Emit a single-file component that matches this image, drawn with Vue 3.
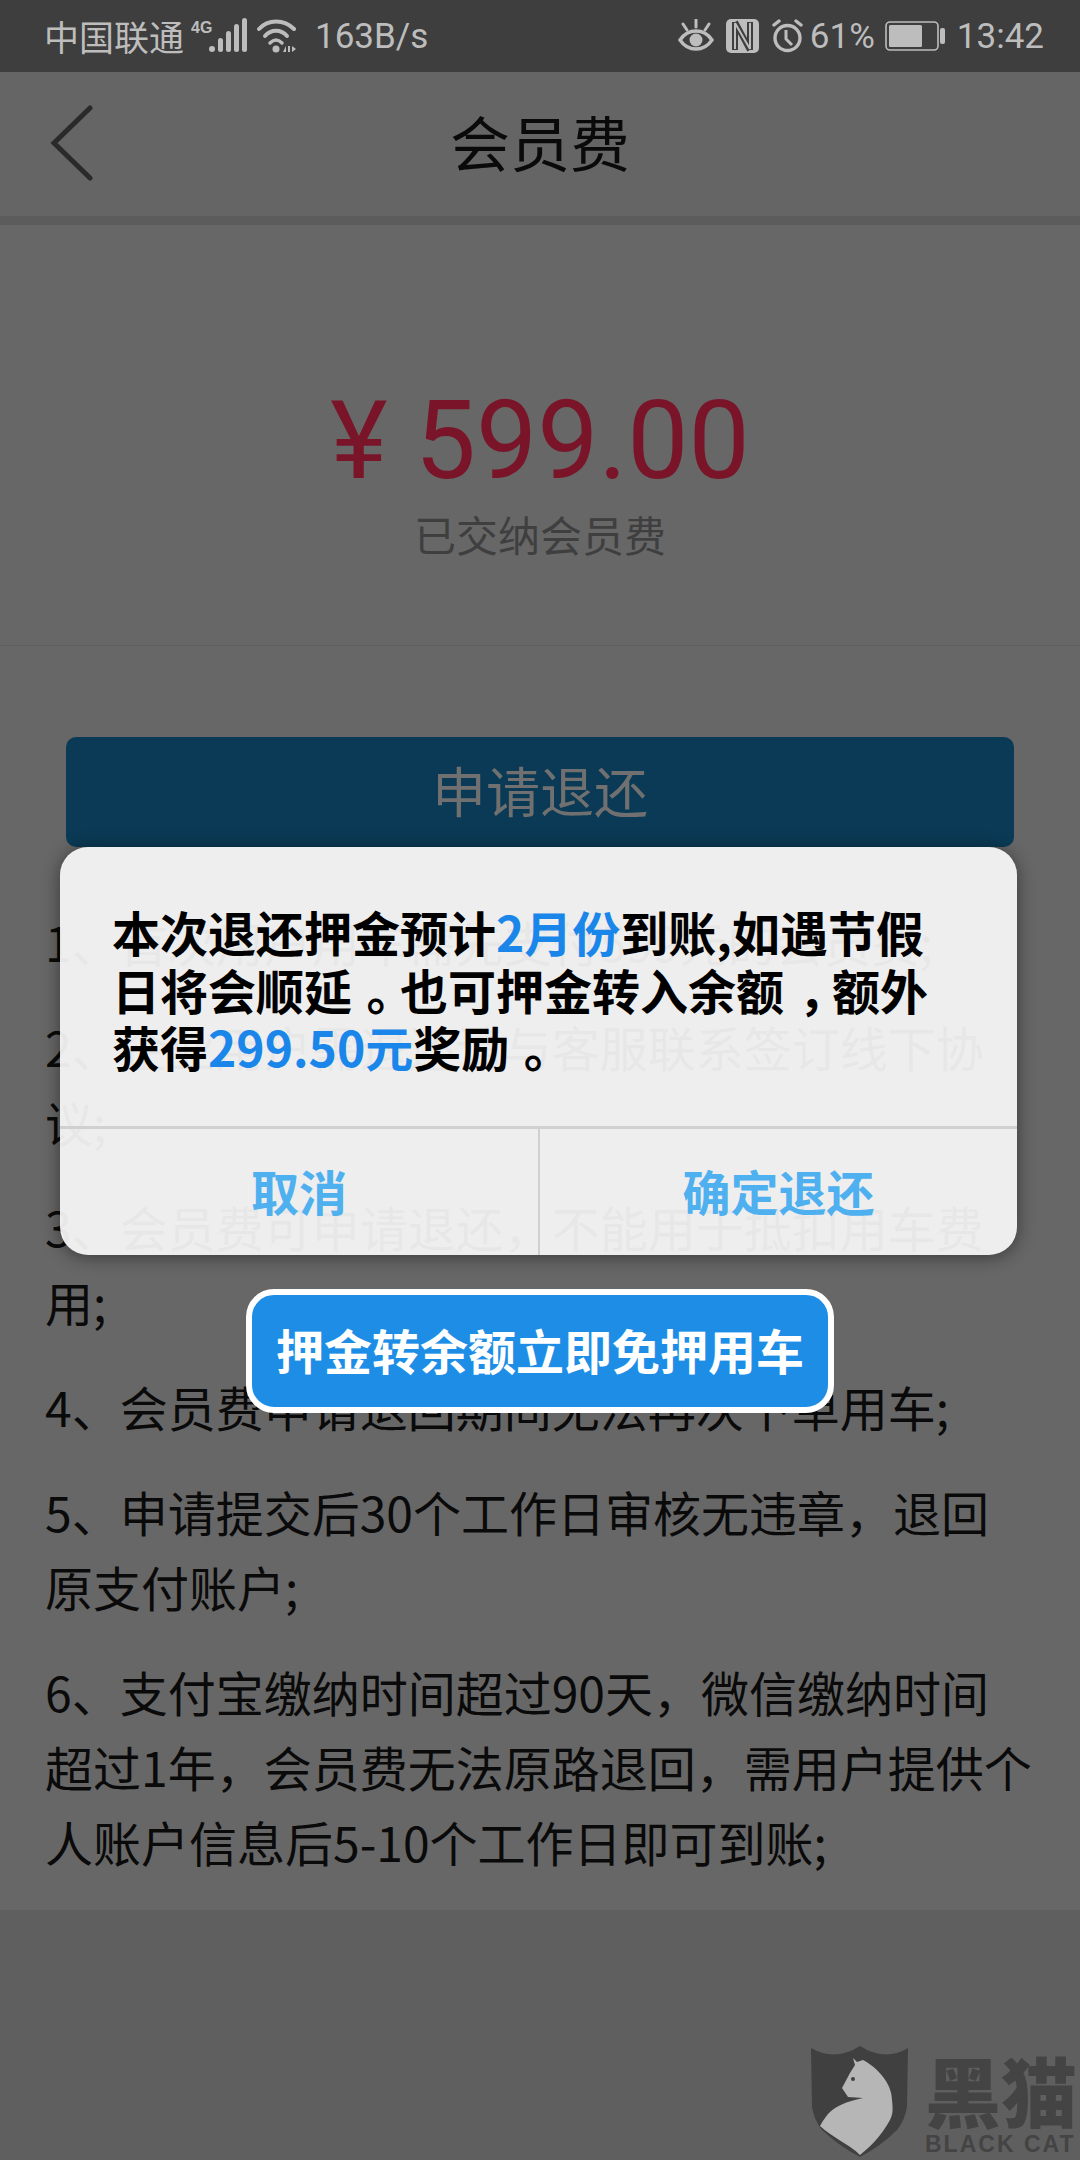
<script setup>
const rules = [
  '1、首次用户用车需先支付599元的会员费;',
  '2、企业用户需退还请与客服联系签订线下协议;',
  '3、会员费可申请退还，不能用于抵扣用车费用;',
  '4、会员费申请退回期间无法再次下单用车;',
  '5、申请提交后30个工作日审核无违章，退回原支付账户;',
  '6、支付宝缴纳时间超过90天，微信缴纳时间超过1年，会员费无法原路退回，需用户提供个人账户信息后5-10个工作日即可到账;',
]
</script>

<template>
  <div class="page">
    <header class="status">
      <div class="status__left">
        <span class="carrier">中国联通</span>
        <svg class="icon-signal" width="58" height="36" viewBox="0 0 58 36" aria-hidden="true">
          <text x="0" y="15" class="net-label">4G</text>
          <circle cx="21" cy="31" r="3" fill="#bdbdbd" />
          <rect x="27" y="20" width="5" height="14" rx="2.5" fill="#bdbdbd" />
          <rect x="35" y="13" width="5" height="21" rx="2.5" fill="#bdbdbd" />
          <rect x="43" y="6" width="5" height="28" rx="2.5" fill="#bdbdbd" />
          <rect x="51" y="0" width="5" height="34" rx="2.5" fill="#bdbdbd" />
        </svg>
        <svg class="icon-wifi" width="40" height="36" viewBox="0 0 40 36" aria-hidden="true">
          <path d="M2 11C11 1 27 1 37 11" fill="none" stroke="#bdbdbd" stroke-width="4" stroke-linecap="round" />
          <path d="M8 18C14 11 24 11 30 18" fill="none" stroke="#bdbdbd" stroke-width="4" stroke-linecap="round" />
          <path d="M13 25C17 21 21 21 25 25" fill="none" stroke="#bdbdbd" stroke-width="3.5" stroke-linecap="round" />
          <circle cx="19" cy="31" r="3.5" fill="#bdbdbd" />
          <path d="M26 34l3-6v6zM31 28h2v6h-2zM35 28l4 3-4 3z" fill="#bdbdbd" />
        </svg>
        <span class="speed">163B/s</span>
      </div>
      <div class="status__right">
        <svg width="36" height="34" viewBox="0 0 36 34" aria-hidden="true">
          <path d="M2 21C10 9 26 9 34 21C26 33 10 33 2 21Z" fill="none" stroke="#bdbdbd" stroke-width="3.4" />
          <circle cx="18" cy="21" r="6.5" fill="#bdbdbd" />
          <path d="M18 1v7M5 5l4 6M31 5l-4 6" stroke="#bdbdbd" stroke-width="3" stroke-linecap="round" />
        </svg>
        <svg width="33" height="34" viewBox="0 0 33 34" aria-hidden="true">
          <rect width="33" height="34" rx="5" fill="#bdbdbd" />
          <path d="M9 3v28M24 3v28M9 3l15 28" fill="none" stroke="#3e3e3e" stroke-width="6" />
          <path d="M9 4v26M24 4v26M9 4l15 26" fill="none" stroke="#bdbdbd" stroke-width="2" />
        </svg>
        <svg width="33" height="34" viewBox="0 0 33 34" aria-hidden="true">
          <circle cx="16.5" cy="19" r="12.5" fill="none" stroke="#bdbdbd" stroke-width="3.4" />
          <path d="M15 11v9l6 6" fill="none" stroke="#bdbdbd" stroke-width="3" />
          <path d="M3 6l5-4M30 6l-5-4" stroke="#bdbdbd" stroke-width="3.4" stroke-linecap="round" />
        </svg>
        <span class="percent">61%</span>
        <svg width="60" height="30" viewBox="0 0 60 30" aria-hidden="true">
          <rect x="1" y="1" width="52" height="28" rx="4" fill="none" stroke="#bdbdbd" stroke-width="1.6" />
          <rect x="4" y="4" width="33" height="22" rx="1.5" fill="#bdbdbd" />
          <rect x="55" y="7" width="5" height="16" rx="2" fill="#bdbdbd" />
        </svg>
        <span class="clock">13:42</span>
      </div>
    </header>

    <nav class="nav">
      <svg class="nav__back" width="44" height="76" viewBox="0 0 44 76" aria-hidden="true">
        <path d="M40 3L4 38L40 73" fill="none" stroke="#2a2a2a" stroke-width="5" stroke-linecap="round" />
      </svg>
      <h1>会员费</h1>
    </nav>

    <section class="hero">
      <div class="hero__amount">¥ 599.00</div>
      <div class="hero__label">已交纳会员费</div>
    </section>

    <main class="content">
      <button class="refund" type="button">申请退还</button>
      <p v-for="rule in rules" :key="rule" class="rule">{{ rule }}</p>
    </main>

    <div class="dialog">
      <div class="dialog__body">
        本次退还押金预计<em>2月份</em>到账,如遇节假日将会顺延<span class="mid">。</span>也可押金转入余额<span class="mid">，</span>额外获得<em>299.50元</em>奖励<span class="mid">。</span>
      </div>
      <div class="dialog__actions">
        <span>取消</span>
        <span>确定退还</span>
      </div>
    </div>

    <div class="promo">押金转余额立即免押用车</div>

    <div class="mark">
      <svg width="102" height="116" viewBox="0 0 102 116" aria-hidden="true">
        <path d="M2 4Q26 18 51 2Q76 18 99 4L98 63Q96 76 88 86Q72 102 51 113Q30 102 13 86Q5 76 3 63Z" fill="#404040" />
        <path d="M44 14L48 18L54 16C66 22 83 38 83 56C84 66 84 70 81 76C72 92 62 102 51 111C40 100 24 94 11 82C14 76 18 71 21 68C28 62 36 58 54 54L39 53L33 44L41 29L46 21Z" fill="#b6b6b6" />
        <circle cx="44" cy="35" r="2" fill="#404040" />
      </svg>
      <div class="mark__words">
        <strong>黑猫</strong>
        <span>BLACK CAT</span>
      </div>
    </div>
  </div>
</template>

<style>
html,
body {
  margin: 0;
  background: #5f5f5f;
}
</style>

<style scoped>
.page {
  position: relative;
  width: 1080px;
  height: 2160px;
  overflow: hidden;
  background: #5f5f5f;
  color: #0a0a0a;
  font-family: "Noto Sans CJK SC", "Noto Sans", sans-serif;
}

.status {
  display: flex;
  align-items: center;
  justify-content: space-between;
  height: 72px;
  padding: 0 36px 0 44px;
  box-sizing: border-box;
  color: #bdbdbd;
  background: #3e3e3e;
  font-family: Roboto, "Noto Sans CJK SC", sans-serif;
  font-size: 35px;
}

.status__left,
.status__right {
  display: flex;
  align-items: center;
}

.carrier {
  font-family: "Noto Sans CJK SC", sans-serif;
  font-size: 35px;
  line-height: 72px;
}

.icon-signal {
  margin-left: 7px;
}

.icon-wifi {
  margin-left: 8px;
}

.net-label {
  fill: #bdbdbd;
  font-family: "Liberation Sans", sans-serif;
  font-size: 16px;
  font-weight: 700;
}

.speed {
  margin-left: 18px;
}

.status__right svg {
  margin-right: 12px;
}

.percent {
  margin: 0 10px 0 -6px;
}

.nav {
  position: relative;
  display: flex;
  align-items: center;
  justify-content: center;
  height: 144px;
  background: #656565;
  border-bottom: 9px solid #5c5c5c;
}

.nav__back {
  position: absolute;
  top: 33px;
  left: 50px;
}

.nav h1 {
  margin: 0 0 6px;
  font-size: 60px;
  font-weight: 400;
  line-height: 80px;
}

.hero {
  display: flex;
  flex-direction: column;
  align-items: center;
  height: 421px;
  padding-top: 152px;
  box-sizing: border-box;
  background: #676767;
  border-bottom: 1px solid #5f5f5f;
}

.hero__amount {
  color: #7a1428;
  font-family: Roboto, sans-serif;
  font-size: 109px;
  line-height: 128px;
}

.hero__label {
  margin-top: -1px;
  color: #3f3f3f;
  font-size: 42px;
  line-height: 60px;
}

.content {
  height: 1264px;
  padding: 91px 45px 0;
  box-sizing: border-box;
  background: #676767;
}

.refund {
  display: block;
  width: 948px;
  height: 110px;
  margin: 0 0 57px 21px;
  padding: 0 0 5px;
  border: 0;
  border-radius: 10px;
  color: #707070;
  background: #0a3a55;
  font-family: inherit;
  font-size: 54px;
}

.rule {
  margin: 0 0 30px;
  font-size: 48px;
  line-height: 75px;
}

.dialog {
  position: absolute;
  top: 847px;
  left: 60px;
  display: flex;
  flex-direction: column;
  width: 957px;
  height: 408px;
  border-radius: 28px;
  overflow: hidden;
  background: rgb(249 249 249 / 93%);
  box-shadow: 0 2px 18px rgb(0 0 0 / 45%);
}

.dialog__body {
  height: 279px;
  padding: 56px 50px 0 52px;
  box-sizing: border-box;
  color: #000;
  font-size: 48px;
  font-weight: 700;
  line-height: 57.5px;
}

.dialog__body em {
  color: #1a86ea;
  font-style: normal;
}

/* punctuation sits in the middle of its cell but stays on the baseline */
.mid {
  display: inline-block;
  width: 1em;
  text-indent: 0.3em;
}

.dialog__actions {
  display: grid;
  flex: 1;
  grid-template-columns: 478px 1fr;
  border-top: 3px solid #d0d0d0;
  color: #4fb0f0;
  font-size: 48px;
  font-weight: 700;
}

.dialog__actions span {
  padding-top: 26px;
  text-align: center;
}

.dialog__actions span + span {
  border-left: 2px solid #d0d0d0;
}

.promo {
  position: absolute;
  top: 1289px;
  left: 246px;
  width: 588px;
  height: 124px;
  border: 6px solid #fff;
  border-radius: 28px;
  box-sizing: border-box;
  color: #fff;
  background: #1d8de6;
  font-size: 48px;
  font-weight: 700;
  line-height: 108px;
  text-align: center;
}

.mark {
  position: absolute;
  top: 2044px;
  left: 809px;
  display: flex;
  gap: 14px;
}

.mark__words {
  display: flex;
  flex-direction: column;
  flex: none;
  color: #444;
}

.mark__words strong {
  margin-top: 10px;
  font-size: 76px;
  font-weight: 900;
  line-height: 70px;
  white-space: nowrap;
}

.mark__words span {
  margin-top: 7px;
  font-family: "Liberation Sans", sans-serif;
  font-size: 23px;
  font-weight: 700;
  letter-spacing: 2px;
  line-height: 26px;
  white-space: nowrap;
}
</style>
